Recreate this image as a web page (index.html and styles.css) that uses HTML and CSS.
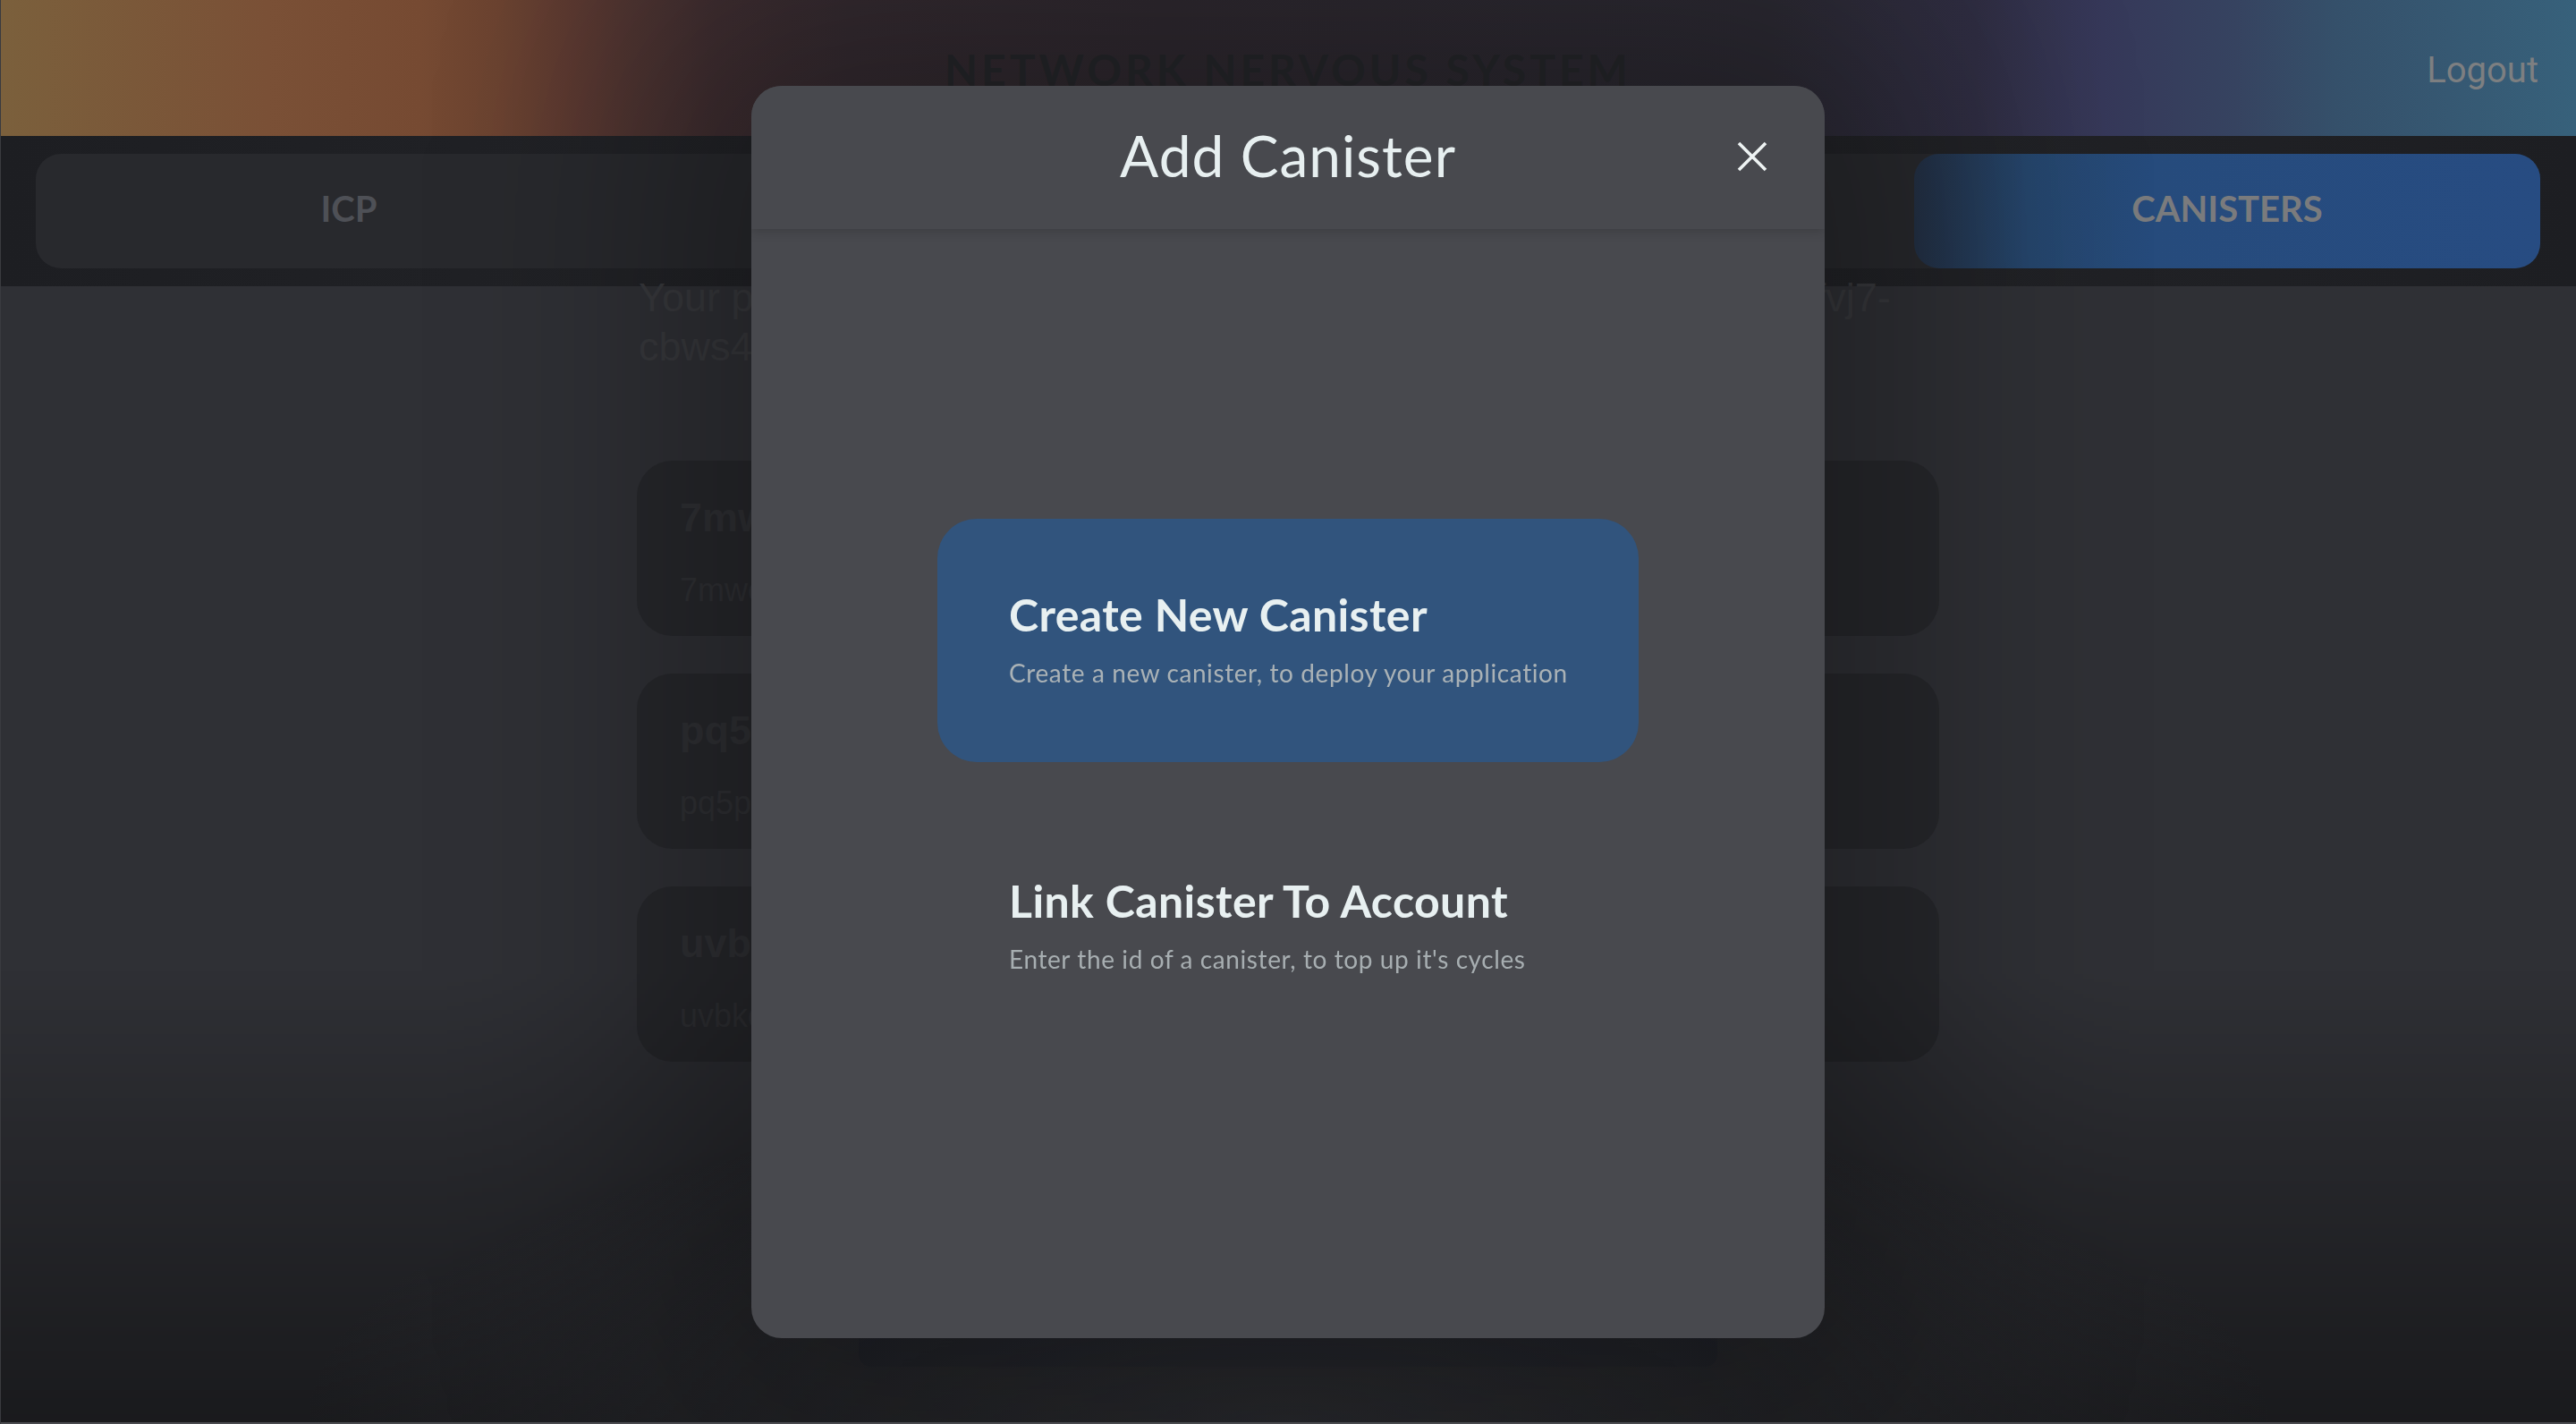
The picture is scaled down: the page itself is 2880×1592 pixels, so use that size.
FILE: index.html
```html
<!DOCTYPE html>
<html lang="en">
<head>
<meta charset="utf-8">
<title>Network Nervous System – Canisters</title>
<link rel="stylesheet" href="styles.css">
</head>
<body>
<div class="page">
  <header class="topbar">
    <div class="topbar-spacer"></div>
    <div class="brand">NETWORK NERVOUS SYSTEM</div>
    <button class="logout">Logout</button>
  </header>
  <nav class="tabbar">
    <div class="tabs">
      <div class="tab">ICP</div>
      <div class="tab">NEURONS</div>
      <div class="tab">VOTING</div>
      <div class="tab tab-active">CANISTERS</div>
    </div>
  </nav>
  <main class="content">
    <p class="principal">Your principal id is "2ihyb-6ccke-zdpwz-yrsrt-rmqhx-nhplz-atlnb-kpfvj7-<br>cbws4-ahtwq-ubz5d-zqe"</p>
    <div class="canister-list">
      <div class="canister-card">
        <div class="canister-name">7mwcd-aaaaa-aaaae-aaawq-cai</div>
        <div class="canister-id">7mwcd-aaaaa-aaaae-aaawq-cai</div>
      </div>
      <div class="canister-card">
        <div class="canister-name">pq5pa-piaaa-aaaae-aaaxa-cai</div>
        <div class="canister-id">pq5pa-piaaa-aaaae-aaaxa-cai</div>
      </div>
      <div class="canister-card">
        <div class="canister-name">uvbkq-2qaaa-aaaae-aaayq-cai</div>
        <div class="canister-id">uvbkq-2qaaa-aaaae-aaayq-cai</div>
      </div>
    </div>
  </main>
  <div class="bottom-action">Create or Link Canister</div>
</div>

<div class="overlay">
  <div class="modal" role="dialog" aria-label="Add Canister">
    <div class="modal-header">
      <h2 class="modal-title">Add Canister</h2>
      <button class="close" aria-label="Close">
        <svg viewBox="0 0 34 34" width="34" height="34"><path d="M2 2 L32 32 M32 2 L2 32" stroke="#eef3f3" stroke-width="3.6" stroke-linecap="butt" fill="none"/></svg>
      </button>
    </div>
    <div class="modal-body">
      <div class="option option-primary">
        <div class="option-title">Create New Canister</div>
        <div class="option-text">Create a new canister, to deploy your application</div>
      </div>
      <div class="option">
        <div class="option-title">Link Canister To Account</div>
        <div class="option-text">Enter the id of a canister, to top up it's cycles</div>
      </div>
    </div>
  </div>
</div>
<div class="frame"></div>
</body>
</html>
```

FILE: styles.css
```css
* { box-sizing: border-box; }

html, body {
  margin: 0;
  padding: 0;
}

body {
  width: 2880px;
  height: 1592px;
  overflow: hidden;
  background: #2f3035;
  font-family: Lato, "Noto Sans", sans-serif;
}

.page {
  display: flex;
  flex-direction: column;
  height: 1592px;
}

/* ---------- top bar ---------- */
.topbar {
  height: 152px;
  flex: none;
  display: grid;
  grid-template-columns: 1fr auto 1fr;
  align-items: center;
  padding: 0 42px;
  background: linear-gradient(90deg,
    #7b603c 0px, #7a5036 300px, #764a32 470px, #6a4230 560px,
    #5a3830 640px, #4a3230 720px, #3e2d30 800px, #352b31 950px,
    #2f2930 1300px, #2c2a33 1980px,
    #2f2d42 2210px, #363859 2350px, #364360 2500px, #35506a 2610px,
    #37617b 2880px);
}

.brand {
  font-family: Lato, sans-serif;
  font-weight: 700;
  font-size: 48px;
  letter-spacing: 4px;
  color: #26272b;
  padding-top: 2px;
}

.logout {
  justify-self: end;
  background: none;
  border: 0;
  padding: 0;
  font-family: Roboto, sans-serif;
  font-size: 40px;
  color: #7d7f81;
  padding-top: 4px;
}

/* ---------- tabs ---------- */
.tabbar {
  flex: none;
  height: 168px;
  padding: 20px 40px;
  background: linear-gradient(90deg, #1d1e22 0%, #222327 30%, #222327 70%, #1d1e22 100%);
}

.tabs {
  display: flex;
  height: 128px;
  background: #28292d;
  border-radius: 28px;
}

.tab {
  flex: 1;
  display: flex;
  align-items: center;
  justify-content: center;
  padding-bottom: 6px;
  font-weight: 700;
  font-size: 40px;
  color: #4e5056;
  border-radius: 28px;
}

.tab-active {
  color: #7a7b7d;
  background: linear-gradient(90deg, #233044 0%, #25456b 18%, #264b7c 38%, #274c82 100%);
}

/* ---------- content ---------- */
.content {
  width: 1456px;
  margin: 0 auto;
  flex: 1;
}

.principal {
  margin: -15px 0 0;
  padding: 0 2px;
  font-family: "Liberation Sans", Arial, sans-serif;
  font-size: 45px;
  line-height: 55px;
  color: #38393d;
}

.canister-list {
  margin-top: 100px;
  display: flex;
  flex-direction: column;
  gap: 42px;
}

.canister-card {
  height: 196px;
  background: #27282c;
  border-radius: 40px;
  padding: 34px 48px 0;
  font-family: "Liberation Sans", Arial, sans-serif;
}

.canister-name {
  font-weight: 700;
  font-size: 45px;
  line-height: 60px;
  color: #303135;
}

.canister-id {
  margin-top: 30px;
  font-size: 36px;
  line-height: 42px;
  color: #303135;
}

.bottom-action {
  position: fixed;
  left: 960px;
  width: 960px;
  bottom: 64px;
  height: 110px;
  border-radius: 14px;
  background: #272a33;
  color: #3a3d46;
  display: flex;
  align-items: center;
  justify-content: center;
  font-size: 40px;
  font-weight: 700;
}

/* ---------- overlay + modal ---------- */
.overlay {
  position: fixed;
  inset: 0;
  display: flex;
  align-items: center;
  justify-content: center;
  background:
    radial-gradient(ellipse 1100px 380px at 50% 100%, rgba(52, 53, 58, 0.55), rgba(52, 53, 58, 0) 100%),
    linear-gradient(to bottom, rgba(0, 0, 0, 0) 68%, rgba(0, 0, 0, 0.45) 100%);
}

.modal {
  width: 1200px;
  height: 1400px;
  background: #48494e;
  border-radius: 34px;
  box-shadow: 0 0 600px 100px rgba(0, 0, 0, 0.3);
  display: flex;
  flex-direction: column;
  overflow: hidden;
}

.modal-header {
  position: relative;
  z-index: 1;
  flex: none;
  height: 160px;
  display: flex;
  align-items: center;
  justify-content: center;
  padding-bottom: 6px;
  background: #48494e;
  box-shadow: 0 3px 12px rgba(0, 0, 0, 0.16);
}

.modal-title {
  margin: 0;
  font-family: Lato, sans-serif;
  font-weight: 400;
  font-size: 64px;
  letter-spacing: 1px;
  color: #e7eff0;
}

.close {
  position: absolute;
  top: 62px;
  right: 64px;
  width: 34px;
  height: 34px;
  padding: 0;
  border: 0;
  background: none;
  display: block;
}

.close svg { display: block; }

.modal-body {
  flex: 1;
  display: flex;
  flex-direction: column;
  align-items: center;
  justify-content: center;
  gap: 48px;
}

.option {
  width: 784px;
  height: 272px;
  border-radius: 44px;
  padding: 0 30px 6px 80px;
  display: flex;
  flex-direction: column;
  justify-content: center;
}

.option-primary {
  background: #31547d;
}

.option-title {
  font-weight: 700;
  font-size: 50px;
  letter-spacing: 0.4px;
  line-height: 58px;
  color: #e8f0f1;
}

.option-text {
  margin-top: 20px;
  font-size: 28px;
  letter-spacing: 0.6px;
  line-height: 32px;
  color: #a7aeb1;
}

.option-primary .option-text {
  color: #aab2b6;
}

.frame {
  position: fixed;
  inset: 0;
  pointer-events: none;
  box-shadow: inset 1px 0 0 #3a3b3f, inset 0 -2px 0 #4a4b4f;
}
```
